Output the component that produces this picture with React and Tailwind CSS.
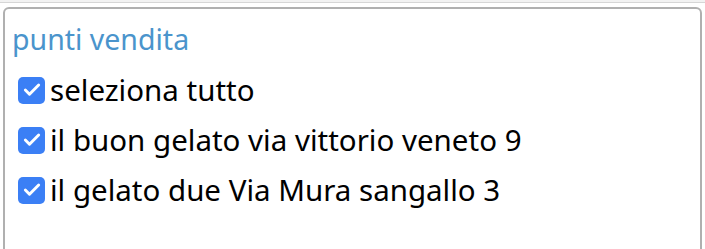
import { Check } from "lucide-react";

const items = [
	"seleziona tutto",
	"il buon gelato via vittorio veneto 9",
	"il gelato due Via Mura sangallo 3",
];

function Box() {
	return (
		<span className="flex h-[27px] w-[27px] shrink-0 items-center justify-center rounded-[5px] bg-[#3b7ff5]">
			<Check className="h-[20px] w-[20px] text-white" strokeWidth={3.5} />
		</span>
	);
}

export default function App() {
	return (
		<div className="h-[249px] overflow-hidden bg-white" style={{ fontFamily: '"Noto Sans", sans-serif' }}>
			<div className="h-[3px] border-b border-[#d6d6d6] bg-[#f2f2f2]" />
			<div className="mx-[3px] mt-[4px] h-[260px] rounded-[6px] border-2 border-[#b0b0b0] px-[7px] pt-[15px]">
				<h2 className="text-[28.5px] leading-[30px] text-[#4a94cc]">punti vendita</h2>
				<ul className="mt-[11px] flex flex-col pl-[6px]">
					{items.map((t) => (
						<li key={t} className="flex h-[50px] items-center gap-[5px] text-[29.5px] leading-[50px] text-black">
							<Box />
							<span>{t}</span>
						</li>
					))}
				</ul>
			</div>
		</div>
	);
}
